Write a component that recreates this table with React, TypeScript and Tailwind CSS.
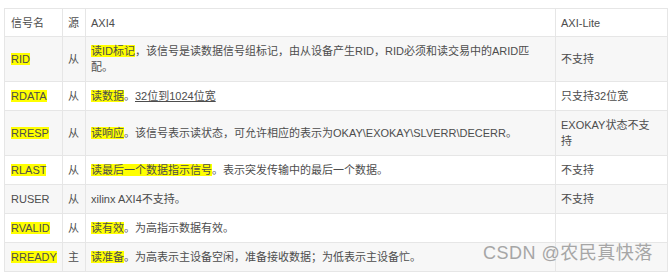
const Hl = ({ children }: { children: React.ReactNode }) => (
  <span className="bg-[#ffff00]">{children}</span>
)

type Row = {
  name: string
  hl: boolean
  src: string
  desc: React.ReactNode
  lite: string
}

const ROWS: Row[] = [
  {
    name: "RID",
    hl: true,
    src: "从",
    desc: (
      <>
        <Hl>读ID标记</Hl>，该信号是读数据信号组标记，由从设备产生RID，RID必须和读交易中的ARID匹配。
      </>
    ),
    lite: "不支持",
  },
  {
    name: "RDATA",
    hl: true,
    src: "从",
    desc: (
      <>
        <Hl>读数据</Hl>。<span className="underline">32位到1024位宽</span>
      </>
    ),
    lite: "只支持32位宽",
  },
  {
    name: "RRESP",
    hl: true,
    src: "从",
    desc: (
      <>
        <Hl>读响应</Hl>。该信号表示读状态，可允许相应的表示为OKAY\EXOKAY\SLVERR\DECERR。
      </>
    ),
    lite: "EXOKAY状态不支持",
  },
  {
    name: "RLAST",
    hl: true,
    src: "从",
    desc: (
      <>
        <Hl>读最后一个数据指示信号</Hl>。表示突发传输中的最后一个数据。
      </>
    ),
    lite: "不支持",
  },
  { name: "RUSER", hl: false, src: "从", desc: "xilinx AXI4不支持。", lite: "不支持" },
  {
    name: "RVALID",
    hl: true,
    src: "从",
    desc: (
      <>
        <Hl>读有效</Hl>。为高指示数据有效。
      </>
    ),
    lite: "",
  },
  {
    name: "RREADY",
    hl: true,
    src: "主",
    desc: (
      <>
        <Hl>读准备</Hl>。为高表示主设备空闲，准备接收数据；为低表示主设备忙。
      </>
    ),
    lite: "",
  },
]

export default function App() {
  return (
    <div
      className="relative h-[272px] w-[670px] overflow-hidden bg-white pl-[4px] pt-[8px] text-[11px] leading-[16px] text-[#4d4d4d]"
      style={{ fontFamily: '"Liberation Sans", "Noto Sans CJK SC", sans-serif' }}
    >
      <table className="w-[663px] table-fixed border-collapse">
        <colgroup>
          <col className="w-[58px]" />
          <col className="w-[23px]" />
          <col className="w-[470px]" />
          <col className="w-[112px]" />
        </colgroup>
        <thead>
          <tr className="h-[28px] bg-white">
            <th className="border border-[#e6e6e6] px-[6px] text-left font-normal">信号名</th>
            <th className="border border-[#e6e6e6] px-[5px] text-left font-normal">源</th>
            <th className="border border-[#e6e6e6] px-[5px] text-left font-normal">AXI4</th>
            <th className="border border-[#e6e6e6] px-[5px] text-left font-normal">AXI-Lite</th>
          </tr>
        </thead>
        <tbody>
          {ROWS.map((r, i) => (
            <tr key={r.name} className={i % 2 === 0 ? "bg-[#f7f7f7]" : "bg-white"}>
              <td className="h-[28px] border border-[#e6e6e6] px-[6px] py-[6px] align-middle">
                {r.hl ? <Hl>{r.name}</Hl> : r.name}
              </td>
              <td className="border border-[#e6e6e6] px-[5px] py-[6px] align-middle">{r.src}</td>
              <td className="border border-[#e6e6e6] px-[5px] py-[6px] align-middle">{r.desc}</td>
              <td className="border border-[#e6e6e6] pl-[5px] pr-[16px] py-[6px] align-middle">{r.lite}</td>
            </tr>
          ))}
        </tbody>
      </table>
      <div className="absolute left-[483px] top-[241px] text-[18px] leading-[24px] tracking-[0.5px] text-[#a6a6a6]">
        CSDN @农民真快落
      </div>
    </div>
  )
}
